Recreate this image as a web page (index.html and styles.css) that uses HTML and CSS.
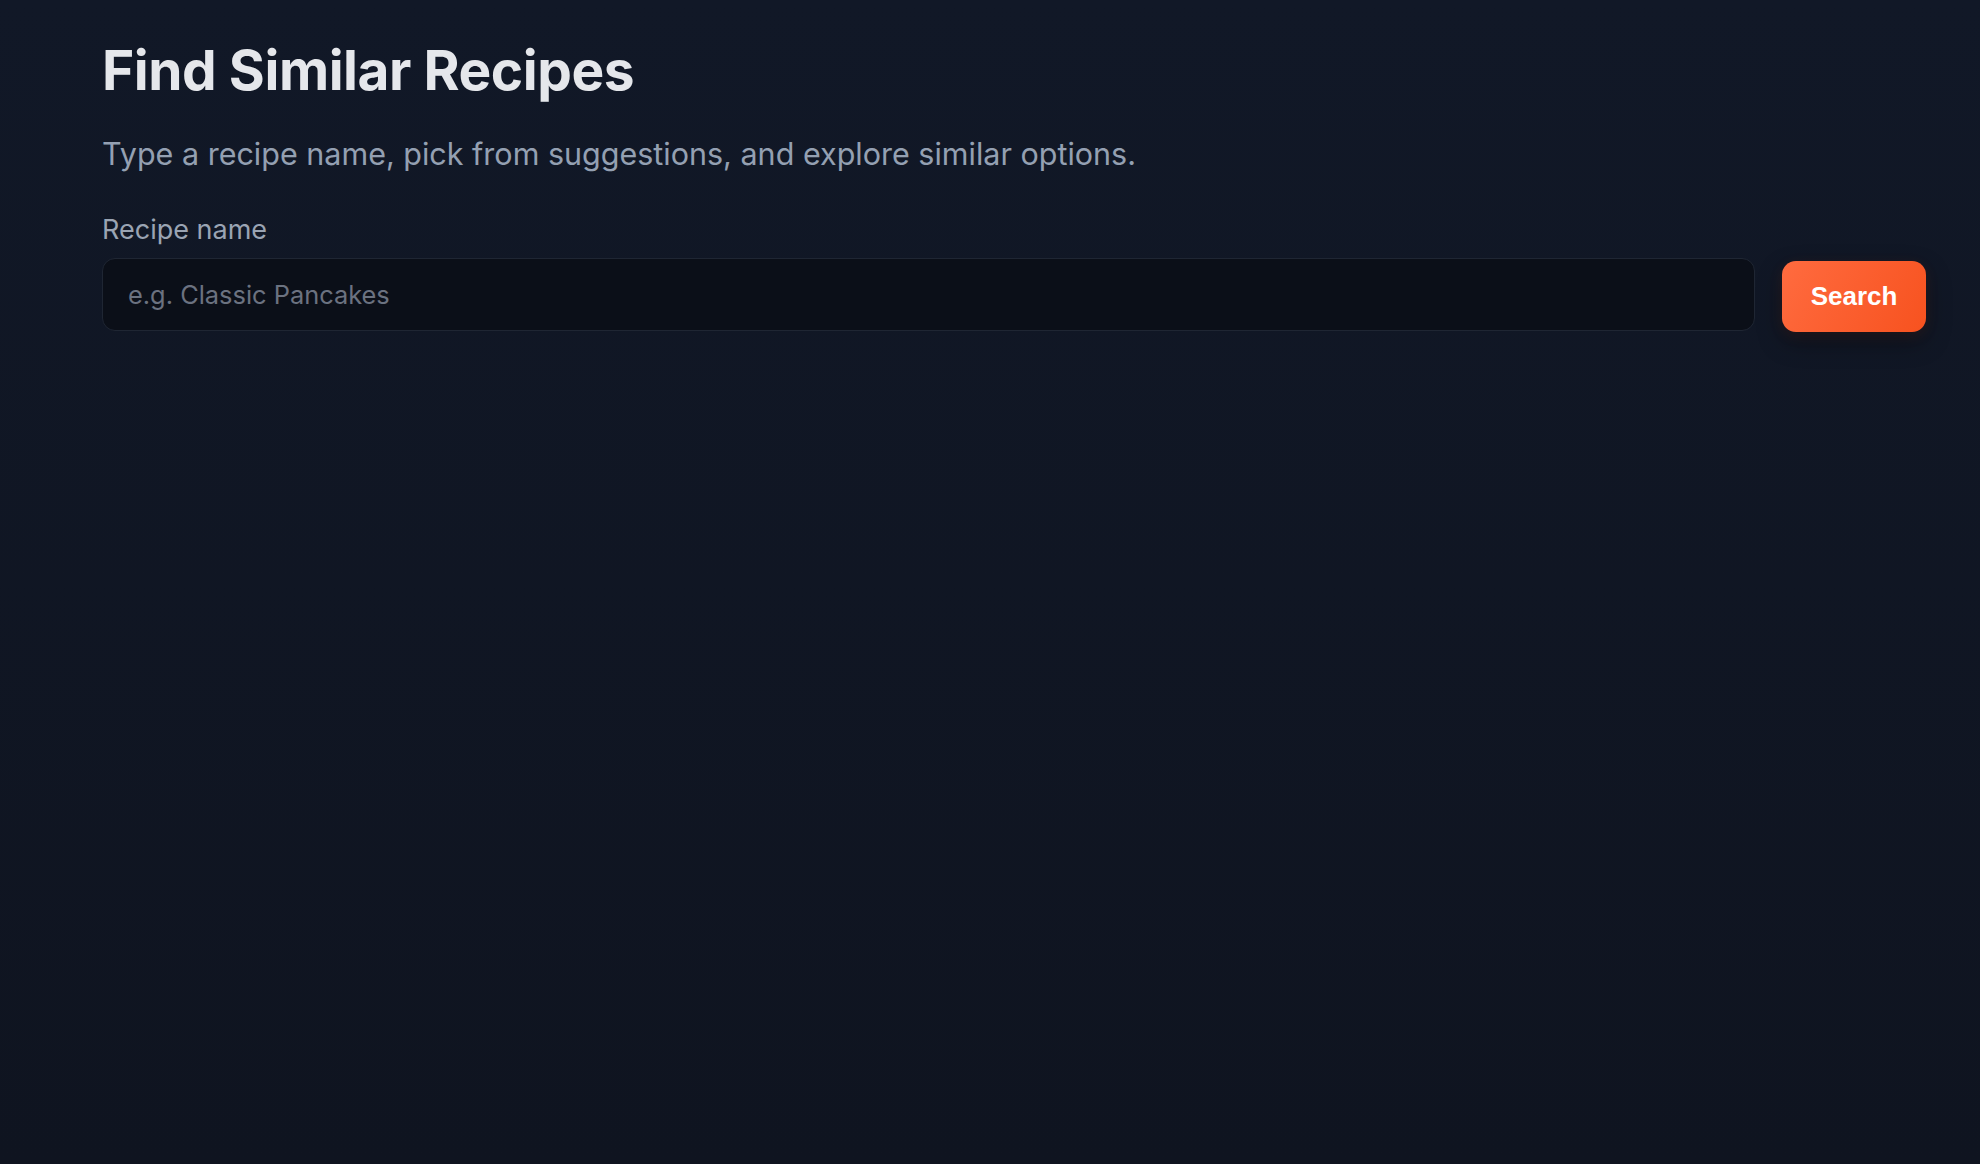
FILE: index.html
```html
<!DOCTYPE html>
<html lang="en">
<head>
<meta charset="utf-8">
<title>Find Similar Recipes</title>
<link rel="stylesheet" href="styles.css">
</head>
<body>
<main class="page">
  <h1 class="title">Find Similar Recipes</h1>
  <p class="subtitle">Type a recipe name, pick from suggestions, and explore similar options.</p>
  <label class="label" for="recipe">Recipe name</label>
  <div class="search-row">
    <input class="input" id="recipe" type="text" placeholder="e.g. Classic Pancakes">
    <button class="button" type="button">Search</button>
  </div>
</main>
</body>
</html>
```

FILE: styles.css
```css
html, body {
  margin: 0;
  padding: 0;
  height: 100%;
}
body {
  background: linear-gradient(180deg, #111827 0%, #0f1420 100%);
  font-family: Inter, "Noto Sans", sans-serif;
  color: #e5e7eb;
}
.page {
  box-sizing: border-box;
  min-height: 100%;
  padding: 37px 54px 0 102px;
  display: flex;
  flex-direction: column;
}
.title {
  margin: 0;
  font-size: 55px;
  line-height: 66px;
  font-weight: 700;
  letter-spacing: -0.45px;
  color: #e5e7eb;
}
.subtitle {
  margin: 29.5px 0 0;
  font-size: 30.5px;
  line-height: 42.7px;
  color: #94a0b2;
}
.label {
  margin-top: 35.6px;
  font-size: 27px;
  line-height: 37.8px;
  color: #9aa4b3;
}
.search-row {
  margin-top: 9.4px;
  display: flex;
  align-items: flex-start;
  gap: 27px;
}
.input {
  flex: 1;
  box-sizing: border-box;
  height: 73px;
  margin: 0;
  padding: 0 25px;
  border: 1px solid #1f2633;
  border-radius: 13px;
  background: #0b0f18;
  font-family: Inter, "Noto Sans", sans-serif;
  font-size: 25.4px;
  color: #e5e7eb;
  outline: none;
}
.input::placeholder {
  color: #6b7280;
}
.button {
  box-sizing: border-box;
  width: 144px;
  height: 71px;
  margin-top: 3px;
  border: 0;
  border-radius: 14px;
  background: linear-gradient(120deg, #ff6b3f 0%, #f7521f 100%);
  color: #ffffff;
  font-family: "Liberation Sans", Arial, sans-serif;
  font-weight: 700;
  font-size: 26px;
  cursor: pointer;
  box-shadow: 0 10px 25px rgba(0, 0, 0, 0.35), 0 4px 14px rgba(249, 90, 40, 0.12);
}
```
